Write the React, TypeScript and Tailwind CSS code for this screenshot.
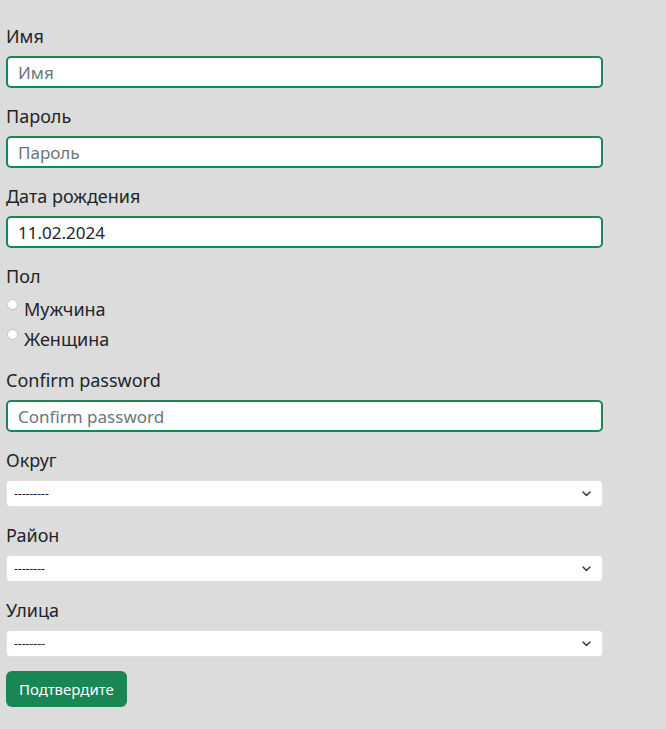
const font = { fontFamily: '"Noto Sans", "Open Sans", sans-serif' }

function TextField({ label, placeholder, value }: { label: string; placeholder: string; value?: string }) {
  return (
    <div className="mb-4">
      <label className="mb-2 block text-[18px] leading-6 text-[#212529]">{label}</label>
      <input
        readOnly
        defaultValue={value}
        placeholder={placeholder}
        className="block h-8 w-full rounded-[5px] border-2 border-[#198754] bg-white px-[10px] text-[17px] text-[#212529] outline-none placeholder:text-[#6c757d]"
      />
    </div>
  )
}

function SelectField({ label, dashes }: { label: string; dashes: string }) {
  return (
    <div className="mb-4">
      <label className="mb-2 block text-[18px] leading-6 text-[#212529]">{label}</label>
      <div className="flex h-[27px] w-full items-center justify-between rounded-[4px] border border-[#dee2e6] bg-white pl-[7px] pr-[11px]">
        <span className="text-[12px] text-[#212529]">{dashes}</span>
        <svg width="9" height="6" viewBox="0 0 9 6" className="text-[#343a40]">
          <polyline points="1,1 4.5,4.5 8,1" fill="none" stroke="currentColor" strokeWidth="1.5" strokeLinecap="round" strokeLinejoin="round" />
        </svg>
      </div>
    </div>
  )
}

function Radio({ label }: { label: string }) {
  return (
    <div className="flex h-[30px] items-center">
      <span className="relative -top-[5px] mr-[6px] ml-[1px] h-[11px] w-[11px] rounded-full border border-[#c4c4c4] bg-white" />
      <span className="text-[18px] text-[#212529]">{label}</span>
    </div>
  )
}

export default function App() {
  return (
    <div className="min-h-[729px] w-full bg-[#dcdcdc]" style={font}>
      <form className="w-[603px] pl-[6px] pt-[24px]">
        <TextField label="Имя" placeholder="Имя" />
        <TextField label="Пароль" placeholder="Пароль" />
        <TextField label="Дата рождения" placeholder="" value="11.02.2024" />

        <div className="mb-[14px]">
          <label className="block text-[18px] leading-6 text-[#212529]">Пол</label>
          <div className="mt-[6px]">
            <Radio label="Мужчина" />
            <Radio label="Женщина" />
          </div>
        </div>

        <TextField label="Confirm password" placeholder="Confirm password" />
        <SelectField label="Округ" dashes="---------" />
        <SelectField label="Район" dashes="--------" />
        <SelectField label="Улица" dashes="--------" />

        <button
          type="button"
          className="-mt-[2px] h-9 rounded-[6px] bg-[#198754] px-[13px] text-[15px] text-white"
        >
          Подтвердите
        </button>
      </form>
    </div>
  )
}
